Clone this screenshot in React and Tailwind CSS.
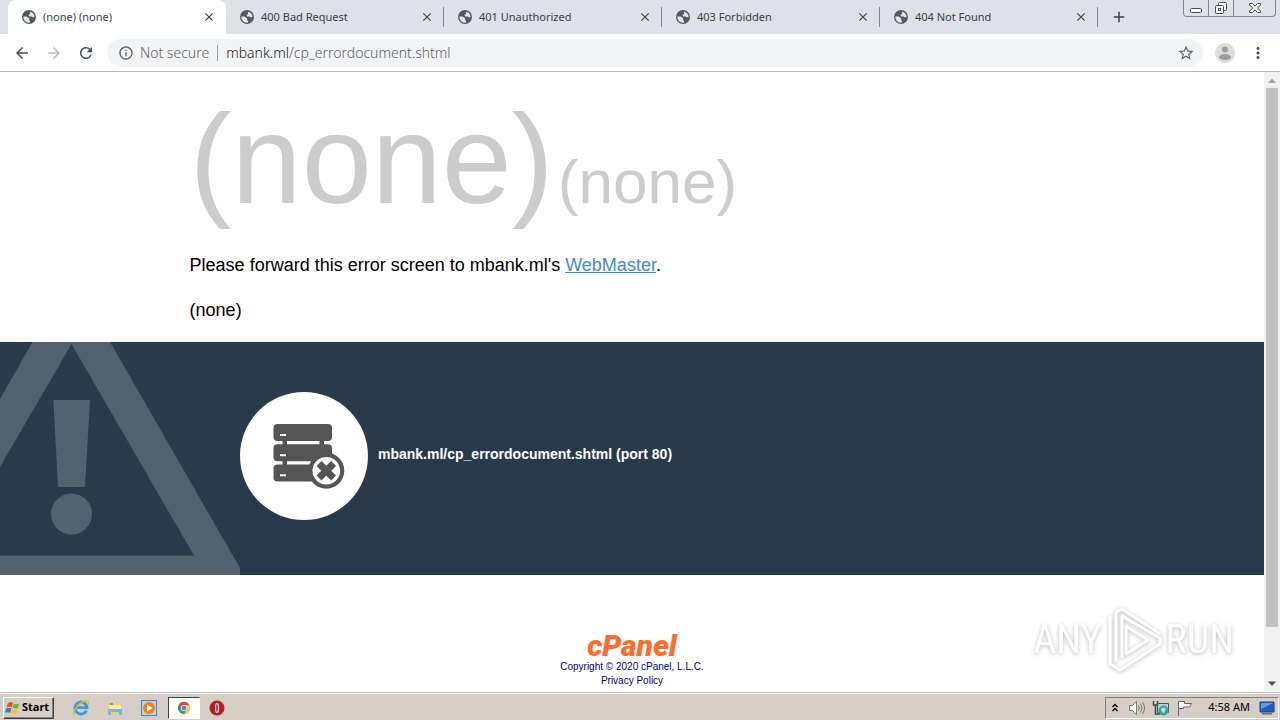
import React from 'react';
import {
  MdArrowBack,
  MdArrowForward,
  MdRefresh,
  MdStarBorder,
  MdInfoOutline,
  MdMoreVert,
  MdClose,
  MdAdd,
} from 'react-icons/md';

const tabs = [
  '(none) (none)',
  '400 Bad Request',
  '401 Unauthorized',
  '403 Forbidden',
  '404 Not Found',
];

function Globe() {
  return (
    <svg viewBox="0 0 16 16" className="size-4 shrink-0">
      <circle cx="8" cy="8" r="7" fill="#55595e" />
      <path d="M2.400 7.600h3.200l2.600 1.800v2l1 .600-.500 1.700C5 14 2.200 11.500 2.400 7.600z" fill="#e4e6ea" />
      <path d="M8.800 2.800c2.500.300 4.600 2.300 4.800 5l-1.600.800-1.400-1.200H8.200L7.400 6l1.800-1z" fill="#e4e6ea" />
    </svg>
  );
}

function Tab({ title, active }) {
  return (
    <div
      className={
        active
          ? 'flex min-w-0 flex-1 items-center rounded-t-lg bg-white pl-[13px]'
          : 'flex min-w-0 flex-1 items-center pl-[13px]'
      }
    >
      <Globe />
      <button type="button" className="min-w-0 flex-1 truncate pl-1.5 text-left text-[11px] text-[#3c4043]">
        {title}
      </button>
      <button type="button" aria-label={'Close ' + title} className="mr-2.5 flex size-3 shrink-0 items-center justify-center text-[#3c4043]">
        <MdClose className="size-3.5 shrink-0" />
      </button>
      <span className={active ? 'h-5 w-px' : 'h-5 w-px bg-[#85898f]'} />
    </div>
  );
}

function WindowButtons() {
  return (
    <div className="ml-auto flex h-[17px] w-[93px] shrink-0 self-start overflow-hidden rounded-b border border-t-0 border-[#85898f]">
      <button type="button" aria-label="Minimize" className="flex w-[25px] items-center justify-center border-r border-[#85898f]">
        <svg viewBox="0 0 14 14" className="size-3.5" fill="#fff" stroke="#4b4f55">
          <rect x="1.5" y="7.5" width="11" height="4" rx="1" />
        </svg>
      </button>
      <button type="button" aria-label="Restore" className="flex w-[25px] items-center justify-center border-r border-[#85898f]">
        <svg viewBox="0 0 14 14" className="size-3.5" fill="#fff" stroke="#4b4f55">
          <rect x="4.500" y="1.500" width="8" height="8" rx="1" />
          <rect x="1.500" y="4.500" width="8" height="8" rx="1" />
          <rect x="4.500" y="7.500" width="2" height="2" />
        </svg>
      </button>
      <button type="button" aria-label="Close window" className="flex flex-1 items-center justify-center">
        <svg viewBox="0 0 14 14" className="size-3.5" fill="#fff" stroke="#4b4f55">
          <path d="M1.500 2.500h3l2.500 2.500 2.500-2.500h3v1.500l-3 3 3 3v1.500h-3l-2.500-2.500-2.500 2.500h-3v-1.500l3-3-3-3z" />
        </svg>
      </button>
    </div>
  );
}

function ServerIcon() {
  return (
    <svg viewBox="0 0 128 128" className="size-32 shrink-0">
      <circle cx="64" cy="64" r="64" fill="#fff" />
      <g fill="#555">
        <rect x="33.500" y="32" width="58.500" height="17" rx="4" />
        <rect x="33.500" y="52.300" width="58.500" height="17" rx="4" />
        <rect x="33.500" y="72.500" width="58.500" height="17" rx="4" />
        <rect x="42.500" y="46" width="4.500" height="30" />
        <rect x="79.500" y="46" width="4.500" height="10" />
      </g>
      <g fill="#fff">
        <rect x="40" y="42" width="6" height="2" />
        <rect x="40" y="62.200" width="6" height="2" />
        <rect x="40" y="82.300" width="6" height="2" />
      </g>
      <circle cx="86.300" cy="78.700" r="18" fill="#555" />
      <circle cx="86.300" cy="78.700" r="13.800" fill="#fff" />
      <path d="M79 71.500 93.600 86M93.600 71.500 79 86" stroke="#555" strokeWidth="7" />
    </svg>
  );
}

function WarningMark() {
  return (
    <svg viewBox="0 0 240 233" className="absolute left-0 top-0 h-full" fill="#54626f">
      <path fillRule="evenodd" d="M32.500 0H110L240 226v7H0v-19.500h194L71.500 2 0 125V57z" />
      <path d="M53.300 58H90l-5 87H58z" />
      <circle cx="71.500" cy="172" r="20.500" />
    </svg>
  );
}

function Watermark() {
  return (
    <div className="absolute bottom-5 right-[30px] flex items-center gap-1 font-['Liberation_Sans_Narrow','Roboto_Condensed','Liberation_Sans',sans-serif] text-[40px] leading-none text-white [filter:drop-shadow(0_1px_2px_#bbb)]">
      <span>ANY</span>
      <svg viewBox="0 0 56 64" className="h-16 w-14" fill="none" stroke="#fff" strokeWidth="3" strokeLinejoin="round">
        <path d="M10 54V4l6-3 38 25" />
        <path d="M4 8v48l10 6 40-26v-6L16 8v42" />
        <path d="M20 18v28l22-14z" />
      </svg>
      <span>RUN</span>
    </div>
  );
}

function Scrollbar() {
  return (
    <div className="flex w-4 shrink-0 flex-col items-center bg-[#f1f1f1]">
      <svg viewBox="0 0 16 16" className="size-4" fill="#a3a3a3">
        <path d="M4 11 8 6.500 12 11z" />
      </svg>
      <div className="w-3 flex-[539] bg-[#c1c1c1]" />
      <div className="flex-[49]" />
      <svg viewBox="0 0 16 16" className="size-4" fill="#505050">
        <path d="M4 5.500 8 10 12 5.500z" />
      </svg>
    </div>
  );
}

function Taskbar() {
  return (
    <footer className="flex h-7 shrink-0 items-center border-t border-[#c9c8c0] bg-[#d6cec6] pl-[3px] pr-px pt-0.5 text-[11px] text-black shadow-[inset_0_1px_0_#fff]">
      <button type="button" className="flex h-[22px] w-[51px] items-center gap-px border border-b-[#404040] border-l-white border-r-[#404040] border-t-white pl-px text-[11px] font-bold shadow-[inset_-1px_-1px_0_#808080]">
        <svg viewBox="0 0 16 16" className="size-4 shrink-0">
          <path d="M3 3q3-2 5 0L6.800 7.500Q4.500 6 1.700 7.300z" fill="#e5532a" />
          <path d="M8.800 3.400Q11 5 14.500 3.500L13.200 8Q10 9.300 7.600 7.800z" fill="#72b33a" />
          <path d="M1.400 8.300Q4 7 6.500 8.500L5.200 13Q3 11.400 0 12.800z" fill="#2b80cf" />
          <path d="M7.300 8.900Q10 10.300 13 9L11.700 13.500Q8.500 14.800 6 13.300z" fill="#f6c12d" />
        </svg>
        Start
      </button>
      <div className="ml-3 flex items-center">
        <button type="button" aria-label="Internet Explorer" className="flex h-[22px] w-[34px] items-center justify-center pr-1">
          <svg viewBox="0 0 18 18" className="size-[18px]" fill="none">
            <path d="M14.500 11.500A6 6 0 1 1 15 8.700H5" stroke="#36a0df" strokeWidth="2.800" />
            <path d="M2.500 16C-1 14 6 3.500 14 2c3-.500 3 2 1.500 4" stroke="#e3b332" strokeWidth="1.300" />
          </svg>
        </button>
        <button type="button" aria-label="Explorer" className="flex h-[22px] w-[34px] items-center justify-center pr-1">
          <svg viewBox="0 0 18 18" className="size-[18px]">
            <path d="M2 3h5l1 2h7v11H2z" fill="#edcf70" />
            <path d="M4 4h3v3H4z" fill="#7cad4d" />
            <path d="M3 6h12v4H3z" fill="#f9eba8" />
            <path d="M2 10h14v6h-3v-3H5v3H2z" fill="#72b9df" />
          </svg>
        </button>
        <button type="button" aria-label="Media Player" className="flex h-[22px] w-[34px] items-center justify-center pr-1">
          <svg viewBox="0 0 18 18" className="size-[18px]">
            <rect x="1.500" y="1.500" width="15" height="15" fill="#b6d8ee" stroke="#4c86b8" />
            <circle cx="9" cy="9" r="6" fill="#ef8415" />
            <path d="M7 5.500v7L12.500 9z" fill="#fff" />
          </svg>
        </button>
        <button type="button" aria-label="Chrome" className="flex h-[22px] w-8 items-center justify-center border border-b-white border-l-[#404040] border-r-white border-t-[#404040] bg-white">
          <svg viewBox="0 0 16 16" className="size-3.5">
            <circle cx="8" cy="8" r="7" fill="#34a160" />
            <path d="M1.900 4.500A7 7 0 0 1 14.100 4.500H8L5 9.800z" fill="#e04a3c" />
            <path d="M14.100 4.500A7 7 0 0 1 8 15l3-5.300L8 4.500z" fill="#fbc931" />
            <circle cx="8" cy="8" r="3.500" fill="#fff" />
            <circle cx="8" cy="8" r="2.700" fill="#4285e8" />
          </svg>
        </button>
        <button type="button" aria-label="Opera" className="flex h-[22px] w-[34px] items-center justify-center">
          <svg viewBox="0 0 18 18" className="size-[18px]">
            <circle cx="9" cy="9" r="7.500" fill="#b91d20" />
            <ellipse cx="9" cy="9" rx="2" ry="5" fill="#fff" />
            <ellipse cx="9" cy="9" rx=".800" ry="4" fill="#8d0d10" />
          </svg>
        </button>
      </div>
      <div className="ml-auto flex h-[22px] items-center border border-b-white border-l-[#808080] border-r-white border-t-[#808080] pl-1 pr-0.5">
        <svg viewBox="0 0 10 14" className="h-3.5 w-2.5" fill="none" stroke="#111" strokeWidth="1.500">
          <path d="M2.500 6 5 3.500 7.500 6M2.500 10 5 7.500 7.500 10" />
        </svg>
        <svg viewBox="0 0 18 18" className="ml-2 size-[18px]" fill="none" stroke="#777">
          <path d="M1.500 6.500h3l4-4v13l-4-4h-3z" fill="#fff" />
          <path d="M10.500 6.500q1.500 2.500 0 5M12.500 4.500q3 4.500 0 9M14.500 3q4 6 0 12" />
        </svg>
        <svg viewBox="0 0 18 18" className="ml-1.5 size-[18px]">
          <path d="M5.500 4.500h11v9h-11z" fill="#b7d7dc" stroke="#4c5966" />
          <path d="M1.500 2v4h4V2M3.500 6v9h5" fill="none" stroke="#444" strokeWidth="1.500" />
          <circle cx="11.500" cy="11.500" r="5" fill="#35a4a0" />
          <path d="M9 10q3-3 5 0l-2 4q-3-1-3-4z" fill="#b9e5d1" />
        </svg>
        <svg viewBox="0 0 18 18" className="ml-1.5 size-[18px]" fill="#fff" stroke="#666">
          <path d="M2.500 17V2.500h6v2h7l-2 3.500h-6V9.500h-5" />
        </svg>
        <span className="ml-3.5 whitespace-nowrap">4:58 AM</span>
        <svg viewBox="0 0 18 18" className="ml-2 size-[18px]">
          <path d="M2 3h14v10H2z" fill="#225fbd" stroke="#233f70" />
          <path d="M3 4h12L3 10z" fill="#5b9ce4" />
          <path d="M4 14h10v1.500H4z" fill="#686f79" />
        </svg>
      </div>
    </footer>
  );
}

export default function App() {
  return (
    <div className="flex min-h-screen flex-col bg-white font-['Noto_Sans',sans-serif]">
      <header>
        <div className="flex h-[34px] bg-[#dee1e6] pl-2 pr-1">
          <nav className="flex w-[1090px] min-w-0">
            {tabs.map((t, i) => (
              <Tab key={t} title={t} active={i === 0} />
            ))}
          </nav>
          <button type="button" aria-label="New tab" className="ml-3 flex items-center text-[#3c4043]">
            <MdAdd className="size-[18px]" />
          </button>
          <WindowButtons />
        </div>
        <div className="flex h-[38px] items-center border-b border-[#b5b5b5] pl-[13px] pr-[13px] text-[#5f6368]">
          <button type="button" aria-label="Back"><MdArrowBack className="size-[18px] text-[#4b4f54]" /></button>
          <button type="button" aria-label="Forward" className="ml-3.5"><MdArrowForward className="size-[18px] text-[#b9bbbe]" /></button>
          <button type="button" aria-label="Reload" className="ml-3.5"><MdRefresh className="size-[18px] text-[#4b4f54]" /></button>
          <div className="ml-3 flex h-7 flex-1 items-center rounded-full bg-[#f1f3f4] pl-[11px] pr-2 text-[14px] font-light">
            <MdInfoOutline className="size-4 shrink-0" />
            <span className="ml-1.5 whitespace-nowrap">Not secure</span>
            <span className="mx-2 h-4 w-px bg-[#9aa0a6]" />
            <a href="#address" className="flex-1 whitespace-nowrap">
              <span className="text-[#202124]">mbank.ml</span>/cp_errordocument.shtml
            </a>
            <button type="button" aria-label="Bookmark"><MdStarBorder className="size-[18px]" /></button>
          </div>
          <button type="button" aria-label="Profile" className="ml-3">
            <svg viewBox="0 0 20 20" className="size-5">
              <circle cx="10" cy="10" r="10" fill="#dcdcdc" />
              <circle cx="10" cy="6.500" r="3" fill="#9b9b9b" />
              <ellipse cx="10" cy="14" rx="6" ry="3" fill="#9b9b9b" />
            </svg>
          </button>
          <button type="button" aria-label="Menu" className="ml-3.5"><MdMoreVert className="size-[18px] text-[#4b4f54]" /></button>
        </div>
      </header>

      <div className="flex flex-1">
        <main className="relative flex flex-1 flex-col font-['Liberation_Sans',Arial,sans-serif]">
          <section className="px-[15%] pt-6 text-[18px] leading-6 text-black">
            <h1 className="whitespace-nowrap text-[126px] leading-[128px] text-[#ccc]">
              (none)<span className="ml-1 text-[62px]">(none)</span>
            </h1>
            <p className="mt-[7px]">
              Please forward this error screen to mbank.ml's{' '}
              <a href="#webmaster" className="text-[#428bca] underline">WebMaster</a>.
            </p>
            <p className="mt-[21px]">(none)</p>
          </section>
          <section className="relative mt-5 flex h-[233px] items-start bg-[#293a4a] pl-[240px] pt-[50px]">
            <WarningMark />
            <ServerIcon />
            <p className="ml-2.5 self-start pt-[52px] text-[14px] font-bold leading-5 text-white">
              mbank.ml/cp_errordocument.shtml (port 80)
            </p>
          </section>
          <section className="flex flex-col items-center pt-[57px] text-[10px] leading-[14px] text-[#00008b]">
            <a href="#cpanel" className="font-['Roboto',sans-serif] text-[30px] font-black italic leading-7 text-[#ff6c2c]">cPanel</a>
            <a href="#copyright">Copyright © 2020 cPanel, L.L.C.</a>
            <a href="#privacy">Privacy Policy</a>
          </section>
          <Watermark />
        </main>
        <Scrollbar />
      </div>
      <Taskbar />
    </div>
  );
}
